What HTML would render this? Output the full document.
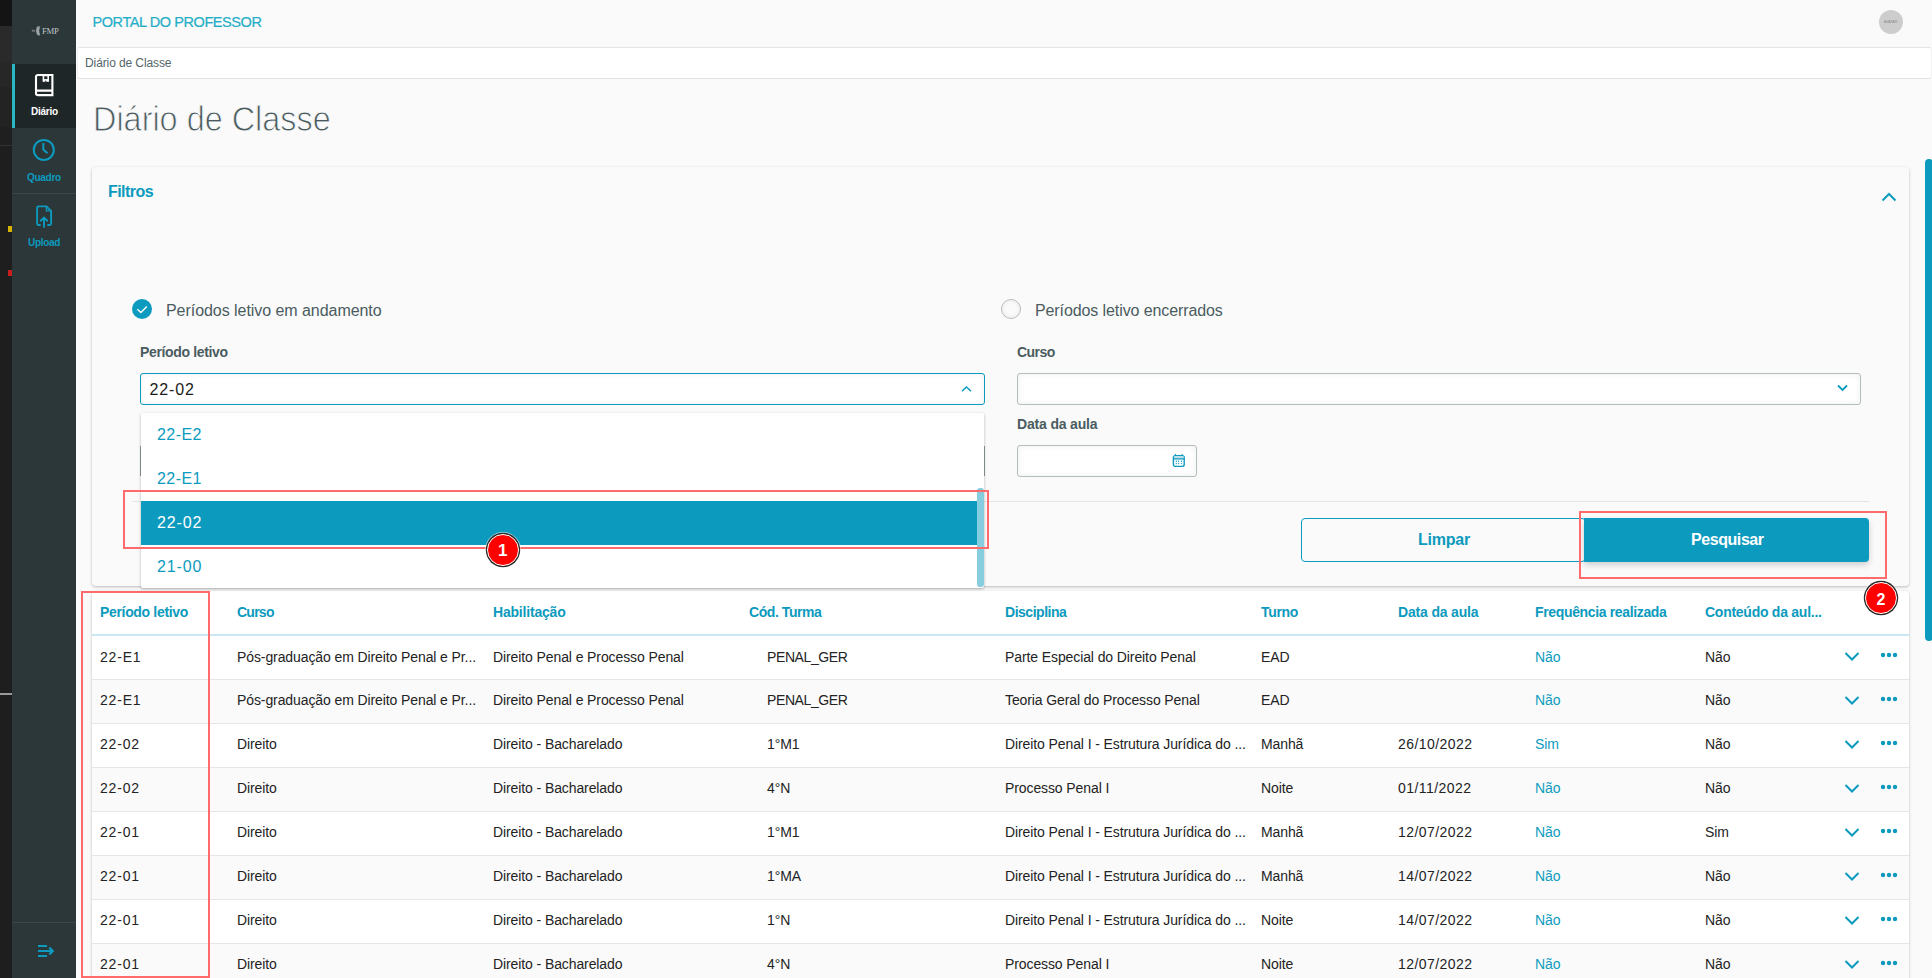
<!DOCTYPE html>
<html><head><meta charset="utf-8">
<style>
*{box-sizing:border-box;margin:0;padding:0}
html,body{width:1932px;height:978px;overflow:hidden;background:#fafafa;font-family:"Liberation Sans",sans-serif;color:#1c1c1c}
.a{position:absolute}
.t{position:absolute;white-space:nowrap;line-height:1}
.teal{color:#0c9abe}
.b{font-weight:700}
/* sidebar */
#strip{left:0;top:0;width:12px;height:978px;background:#1e1e1e}
#side{left:12px;top:0;width:64px;height:978px;background:#2c3739}
/* table */
.row{position:absolute;left:92px;width:1817px;height:44px;border-bottom:1px solid #e6e6e6}
.row.g{background:#fafafa}
.row.w{background:#fff}
.cell{position:absolute;top:13px;font-size:14px;white-space:nowrap;line-height:1;letter-spacing:-0.1px;color:#232323}
.th{position:absolute;top:605px;font-size:14px;font-weight:700;color:#0c9abe;white-space:nowrap;line-height:1;letter-spacing:-0.55px}
.num{letter-spacing:0.8px}
.dt{letter-spacing:0.45px}
</style></head>
<body>
<!-- left window strip -->
<div class="a" id="strip"></div>
<div class="a" style="left:0;top:0;width:12px;height:26px;background:#141414"></div>
<div class="a" style="left:0;top:26px;width:12px;height:36px;background:#2a2a2a"></div>
<div class="a" style="left:0;top:62px;width:12px;height:25px;background:#272727"></div>
<div class="a" style="left:0;top:87px;width:12px;height:40px;background:#232323"></div>
<div class="a" style="left:0;top:127px;width:12px;height:18px;background:#1f1f1f"></div>
<div class="a" style="left:0;top:145px;width:12px;height:1px;background:#333"></div>
<div class="a" style="left:8px;top:226px;width:4px;height:6px;background:#d8b400"></div>
<div class="a" style="left:8px;top:270px;width:4px;height:6px;background:#c81e1e"></div>
<div class="a" style="left:0;top:693px;width:12px;height:2px;background:#9a9a9a"></div>

<!-- sidebar -->
<div class="a" id="side"></div>
<div class="a" style="left:12px;top:64px;width:64px;height:64px;background:#1f2628"></div>
<div class="a" style="left:12px;top:64px;width:3px;height:64px;background:#29b6c6"></div>
<div class="a" style="left:12px;top:193px;width:64px;height:1px;background:#3b4649"></div>
<div class="a" style="left:12px;top:922px;width:64px;height:1px;background:#3b4649"></div>
<!-- logo -->
<div class="t" style="left:41.5px;top:27px;font-family:'Liberation Serif',serif;font-size:8.6px;color:#bfc4c5;letter-spacing:-0.35px;transform:scaleX(1.02);transform-origin:0 0">FMP</div>
<svg class="a" style="left:31px;top:25px" width="11" height="12" viewBox="0 0 11 12"><path d="M6 1.5 Q8.5 1.2 9.5 1.6 Q8 3.5 8.2 5.5 Q8.4 7.8 9.3 10 Q8 11 6.8 10.2 Q5.2 8.8 5 6.5 Q4.8 4 6 1.5Z" fill="#9aa1a3" opacity="0.9"/><path d="M6.8 3 L8 4.5 M6 5.5 L7.5 6.8 M6.3 8 L7.8 9" stroke="#d0d4d5" stroke-width="0.8"/><circle cx="1.8" cy="5.7" r="1.1" fill="#6f7779"/><circle cx="3.4" cy="5.8" r="0.9" fill="#7d8587"/></svg>
<!-- Diario icon -->
<svg class="a" style="left:34px;top:73px" width="21" height="24" viewBox="0 0 21 24"><path d="M2 20.5 V4 Q2 2 4 2 H18.4 V22.1 H4 Q2 22.1 2 20.5 Z M2 17.6 H18.4" stroke="#fff" stroke-width="2.1" fill="none"/><rect x="8.6" y="2" width="6.4" height="6.8" fill="#fff"/><rect x="10.2" y="3.3" width="3.2" height="2.8" fill="#1f2628"/><path d="M11.8 7.2 L10.9 8.8 H12.7 Z" fill="#1f2628"/></svg>
<div class="t b" style="left:31px;top:107px;font-size:10px;color:#fff;letter-spacing:-0.25px">Diário</div>
<!-- Quadro icon -->
<svg class="a" style="left:32px;top:138px" width="24" height="24" viewBox="0 0 24 24"><circle cx="11.8" cy="11.9" r="10" stroke="#0c9abe" stroke-width="2" fill="none"/><path d="M11.3 5 V11.5 L15.5 15.3" stroke="#0c9abe" stroke-width="2" fill="none"/></svg>
<div class="t b" style="left:27px;top:173px;font-size:10px;color:#0c9abe;letter-spacing:-0.29px">Quadro</div>
<!-- Upload icon -->
<svg class="a" style="left:35.5px;top:204.5px" width="17" height="24" viewBox="0 0 18 25"><path d="M5 21 H2.5 Q1.2 21 1.2 19.5 V2.7 Q1.2 1.2 2.7 1.2 H11 L16 6 V19.5 Q16 21 14.5 21 H12" stroke="#0c9abe" stroke-width="2" fill="none"/><path d="M11 1.2 V6 H16" stroke="#0c9abe" stroke-width="1.5" fill="none"/><path d="M8.5 24 V13 M4.5 17 L8.5 13 L12.5 17" stroke="#0c9abe" stroke-width="2" fill="none"/></svg>
<div class="t b" style="left:28px;top:238px;font-size:10px;color:#0c9abe;letter-spacing:-0.3px">Upload</div>
<!-- collapse icon -->
<svg class="a" style="left:37px;top:944px" width="19" height="14" viewBox="0 0 19 14"><path d="M1 2 H10 M1 7 H15 M1 12 H10" stroke="#0c9abe" stroke-width="2"/><path d="M12.3 3.6 L15.8 7 L12.3 10.4" stroke="#0c9abe" stroke-width="2.2" fill="none"/></svg>

<!-- header -->
<div class="t" style="left:92.5px;top:15px;font-size:14.5px;color:#23aec6;letter-spacing:-0.42px;-webkit-text-stroke:0.2px #23aec6">PORTAL DO PROFESSOR</div>
<div class="a" style="left:1879px;top:10px;width:24px;height:24px;border-radius:50%;background:#cdcdcd"></div>
<div class="t" style="left:1884px;top:21px;font-size:3.6px;color:#8a8a8a">AVATAR</div>

<!-- breadcrumb -->
<div class="a" style="left:77px;top:47px;width:1855px;height:32px;background:#fff;border:1px solid #f2f2f2;border-top-color:#e4e4e4;border-bottom-color:#e2e2e2;border-radius:3px"></div>
<div class="t" style="left:85px;top:57px;font-size:12px;color:#55666a;letter-spacing:-0.1px">Diário de Classe</div>

<!-- title -->
<div class="t" style="left:93px;top:100.5px;font-size:35px;color:#4a5c60;transform:scaleX(0.926);transform-origin:0 0;-webkit-text-stroke:0.9px #fafafa;paint-order:normal">Diário de Classe</div>

<!-- filters card -->
<div class="a" style="left:92px;top:167px;width:1817px;height:419px;background:#fafafa;border-radius:4px;box-shadow:0 1px 3px rgba(0,0,0,0.25)"></div>
<div class="t b teal" style="left:108px;top:184px;font-size:16px;letter-spacing:-0.55px">Filtros</div>
<svg class="a" style="left:1881px;top:191px" width="16" height="11" viewBox="0 0 16 11"><path d="M1.5 9.5 L8 3 L14.5 9.5" stroke="#0c9abe" stroke-width="2" fill="none"/></svg>

<!-- radio checked -->
<div class="a" style="left:132px;top:299px;width:20px;height:20px;border-radius:50%;background:#0c9abe"></div>
<svg class="a" style="left:132px;top:299px" width="20" height="20" viewBox="0 0 20 20"><path d="M5.4 10.2 L8.9 13.5 L14.8 7.4" stroke="#fff" stroke-width="1.4" fill="none"/></svg>
<div class="t" style="left:166px;top:303px;font-size:16px;color:#4a5c60;letter-spacing:-0.05px">Períodos letivo em andamento</div>
<!-- radio unchecked -->
<div class="a" style="left:1001px;top:299px;width:20px;height:20px;border-radius:50%;background:#fafafa;border:1.3px solid #b5bcbe;box-shadow:inset 0 0 5px rgba(0,0,0,0.07)"></div>
<div class="t" style="left:1035px;top:303px;font-size:16px;color:#4a5c60;letter-spacing:-0.1px">Períodos letivo encerrados</div>

<!-- labels -->
<div class="t b" style="left:140px;top:345px;font-size:14px;color:#4a5c60;letter-spacing:-0.35px">Período letivo</div>
<div class="t b" style="left:1017px;top:345px;font-size:14px;color:#4a5c60;letter-spacing:-0.55px">Curso</div>
<div class="t b" style="left:1017px;top:417px;font-size:14px;color:#4a5c60;letter-spacing:-0.17px">Data da aula</div>

<!-- periodo input -->
<div class="a" style="left:140px;top:373px;width:845px;height:32px;background:#fff;border:1px solid #0c9abe;border-radius:3px;box-shadow:inset 0 0 6px rgba(0,0,0,0.07)"></div>
<div class="t" style="left:149.5px;top:381.5px;font-size:16px;color:#1c1c1c;letter-spacing:0.9px">22-02</div>
<svg class="a" style="left:960px;top:384px" width="13" height="10" viewBox="0 0 13 10"><path d="M2 7.3 L6.5 3 L11 7.3" stroke="#0c9abe" stroke-width="1.5" fill="none"/></svg>

<!-- curso input -->
<div class="a" style="left:1017px;top:373px;width:844px;height:32px;background:#fff;border:1px solid #b3bcbe;border-radius:3px;box-shadow:inset 0 0 6px rgba(0,0,0,0.07)"></div>
<svg class="a" style="left:1836px;top:383px" width="13" height="10" viewBox="0 0 13 10"><path d="M2 2.5 L6.5 7 L11 2.5" stroke="#0c9abe" stroke-width="1.8" fill="none"/></svg>

<!-- data input -->
<div class="a" style="left:1017px;top:445px;width:180px;height:32px;background:#fff;border:1px solid #b3bcbe;border-radius:3px;box-shadow:inset 0 0 6px rgba(0,0,0,0.07)"></div>
<svg class="a" style="left:1172px;top:453px" width="14" height="15" viewBox="0 0 14 15"><rect x="1.4" y="2.6" width="10.8" height="10.8" rx="1.8" stroke="#0c9abe" stroke-width="1.4" fill="none"/><rect x="2" y="3.2" width="9.6" height="2" fill="#bfe0ea"/><path d="M1.4 5.9 H12.2" stroke="#0c9abe" stroke-width="1.3"/><path d="M3.4 1 V3 M10.2 1 V3" stroke="#0c9abe" stroke-width="1.1"/><circle cx="4.3" cy="8.3" r="0.7" fill="#0c9abe"/><circle cx="6.6" cy="8.3" r="0.7" fill="#0c9abe"/><circle cx="9.5" cy="8.3" r="0.7" fill="#0c9abe"/><circle cx="4.3" cy="10.6" r="0.7" fill="#0c9abe"/><circle cx="6.6" cy="10.6" r="0.7" fill="#0c9abe"/><circle cx="9.5" cy="10.6" r="0.7" fill="#0c9abe"/></svg>

<!-- divider -->
<div class="a" style="left:132px;top:501px;width:1737px;height:1px;background:#e4e4e4"></div>
<div class="a" style="left:140px;top:446px;width:1px;height:30px;background:#8f999b"></div>
<div class="a" style="left:984px;top:446px;width:1px;height:30px;background:#8f999b"></div>

<!-- buttons -->
<div class="a" style="left:1301px;top:518px;width:285px;height:44px;border:1px solid #0c9abe;border-radius:4px;background:#fafafa"></div>
<div class="t b teal" style="left:1418px;top:532px;font-size:16px;letter-spacing:-0.22px">Limpar</div>
<div class="a" style="left:1584px;top:518px;width:285px;height:44px;border-radius:0 4px 4px 0;background:#0c9abe;box-shadow:0 3px 6px rgba(0,0,0,0.18)"></div>
<div class="t b" style="left:1691px;top:532px;font-size:16px;color:#fff;letter-spacing:-0.43px">Pesquisar</div>

<!-- table card -->
<div class="a" style="left:92px;top:591px;width:1817px;height:400px;background:#fff;border-radius:4px;box-shadow:0 1px 3px rgba(0,0,0,0.25)"></div>
<div class="th" style="left:100px;letter-spacing:-0.33px">Período letivo</div>
<div class="th" style="left:237px;letter-spacing:-0.75px">Curso</div>
<div class="th" style="left:493px;letter-spacing:-0.2px">Habilitação</div>
<div class="th" style="left:749px;letter-spacing:-0.43px">Cód. Turma</div>
<div class="th" style="left:1005px;letter-spacing:-0.48px">Disciplina</div>
<div class="th" style="left:1261px;letter-spacing:-0.32px">Turno</div>
<div class="th" style="left:1398px;letter-spacing:-0.17px">Data da aula</div>
<div class="th" style="left:1535px;letter-spacing:-0.35px">Frequência realizada</div>
<div class="th" style="left:1705px;letter-spacing:-0.26px">Conteúdo da aul...</div>
<div class="a" style="left:92px;top:634px;width:1817px;height:2px;background:#c9e8f1"></div>

<div id="rows">
<div class="row w" style="top:636px">
<div class="cell num" style="left:8px;top:14px">22-E1</div>
<div class="cell" style="left:145px;top:14px">Pós-graduação em Direito Penal e Pr...</div>
<div class="cell" style="left:401px;top:14px">Direito Penal e Processo Penal</div>
<div class="cell" style="left:675px;top:14px;letter-spacing:-0.4px">PENAL_GER</div>
<div class="cell" style="left:913px;top:14px">Parte Especial do Direito Penal</div>
<div class="cell" style="left:1169px;top:14px">EAD</div>
<div class="cell" style="left:1443px;color:#0c9abe;top:14px">Não</div>
<div class="cell" style="left:1613px;top:14px">Não</div>
<svg class="a" style="left:1752px;top:13.5px" width="16" height="12" viewBox="0 0 16 12"><path d="M1.5 3 L8 9.5 L14.5 3" stroke="#0c9abe" stroke-width="2" fill="none"/></svg>
<svg class="a" style="left:1788px;top:16px" width="18" height="6" viewBox="0 0 18 6"><circle cx="3" cy="3" r="2.2" fill="#0c9abe"/><circle cx="9" cy="3" r="2.2" fill="#0c9abe"/><circle cx="15" cy="3" r="2.2" fill="#0c9abe"/></svg>
</div>
<div class="row g" style="top:680px">
<div class="cell num" style="left:8px">22-E1</div>
<div class="cell" style="left:145px">Pós-graduação em Direito Penal e Pr...</div>
<div class="cell" style="left:401px">Direito Penal e Processo Penal</div>
<div class="cell" style="left:675px;letter-spacing:-0.4px">PENAL_GER</div>
<div class="cell" style="left:913px">Teoria Geral do Processo Penal</div>
<div class="cell" style="left:1169px">EAD</div>
<div class="cell" style="left:1443px;color:#0c9abe">Não</div>
<div class="cell" style="left:1613px">Não</div>
<svg class="a" style="left:1752px;top:13.5px" width="16" height="12" viewBox="0 0 16 12"><path d="M1.5 3 L8 9.5 L14.5 3" stroke="#0c9abe" stroke-width="2" fill="none"/></svg>
<svg class="a" style="left:1788px;top:16px" width="18" height="6" viewBox="0 0 18 6"><circle cx="3" cy="3" r="2.2" fill="#0c9abe"/><circle cx="9" cy="3" r="2.2" fill="#0c9abe"/><circle cx="15" cy="3" r="2.2" fill="#0c9abe"/></svg>
</div>
<div class="row w" style="top:724px">
<div class="cell num" style="left:8px">22-02</div>
<div class="cell" style="left:145px">Direito</div>
<div class="cell" style="left:401px">Direito - Bacharelado</div>
<div class="cell" style="left:675px">1°M1</div>
<div class="cell" style="left:913px">Direito Penal I - Estrutura Jurídica do ...</div>
<div class="cell" style="left:1169px">Manhã</div>
<div class="cell dt" style="left:1306px">26/10/2022</div>
<div class="cell" style="left:1443px;color:#0c9abe">Sim</div>
<div class="cell" style="left:1613px">Não</div>
<svg class="a" style="left:1752px;top:13.5px" width="16" height="12" viewBox="0 0 16 12"><path d="M1.5 3 L8 9.5 L14.5 3" stroke="#0c9abe" stroke-width="2" fill="none"/></svg>
<svg class="a" style="left:1788px;top:16px" width="18" height="6" viewBox="0 0 18 6"><circle cx="3" cy="3" r="2.2" fill="#0c9abe"/><circle cx="9" cy="3" r="2.2" fill="#0c9abe"/><circle cx="15" cy="3" r="2.2" fill="#0c9abe"/></svg>
</div>
<div class="row g" style="top:768px">
<div class="cell num" style="left:8px">22-02</div>
<div class="cell" style="left:145px">Direito</div>
<div class="cell" style="left:401px">Direito - Bacharelado</div>
<div class="cell" style="left:675px">4°N</div>
<div class="cell" style="left:913px">Processo Penal I</div>
<div class="cell" style="left:1169px">Noite</div>
<div class="cell dt" style="left:1306px">01/11/2022</div>
<div class="cell" style="left:1443px;color:#0c9abe">Não</div>
<div class="cell" style="left:1613px">Não</div>
<svg class="a" style="left:1752px;top:13.5px" width="16" height="12" viewBox="0 0 16 12"><path d="M1.5 3 L8 9.5 L14.5 3" stroke="#0c9abe" stroke-width="2" fill="none"/></svg>
<svg class="a" style="left:1788px;top:16px" width="18" height="6" viewBox="0 0 18 6"><circle cx="3" cy="3" r="2.2" fill="#0c9abe"/><circle cx="9" cy="3" r="2.2" fill="#0c9abe"/><circle cx="15" cy="3" r="2.2" fill="#0c9abe"/></svg>
</div>
<div class="row w" style="top:812px">
<div class="cell num" style="left:8px">22-01</div>
<div class="cell" style="left:145px">Direito</div>
<div class="cell" style="left:401px">Direito - Bacharelado</div>
<div class="cell" style="left:675px">1°M1</div>
<div class="cell" style="left:913px">Direito Penal I - Estrutura Jurídica do ...</div>
<div class="cell" style="left:1169px">Manhã</div>
<div class="cell dt" style="left:1306px">12/07/2022</div>
<div class="cell" style="left:1443px;color:#0c9abe">Não</div>
<div class="cell" style="left:1613px">Sim</div>
<svg class="a" style="left:1752px;top:13.5px" width="16" height="12" viewBox="0 0 16 12"><path d="M1.5 3 L8 9.5 L14.5 3" stroke="#0c9abe" stroke-width="2" fill="none"/></svg>
<svg class="a" style="left:1788px;top:16px" width="18" height="6" viewBox="0 0 18 6"><circle cx="3" cy="3" r="2.2" fill="#0c9abe"/><circle cx="9" cy="3" r="2.2" fill="#0c9abe"/><circle cx="15" cy="3" r="2.2" fill="#0c9abe"/></svg>
</div>
<div class="row g" style="top:856px">
<div class="cell num" style="left:8px">22-01</div>
<div class="cell" style="left:145px">Direito</div>
<div class="cell" style="left:401px">Direito - Bacharelado</div>
<div class="cell" style="left:675px">1°MA</div>
<div class="cell" style="left:913px">Direito Penal I - Estrutura Jurídica do ...</div>
<div class="cell" style="left:1169px">Manhã</div>
<div class="cell dt" style="left:1306px">14/07/2022</div>
<div class="cell" style="left:1443px;color:#0c9abe">Não</div>
<div class="cell" style="left:1613px">Não</div>
<svg class="a" style="left:1752px;top:13.5px" width="16" height="12" viewBox="0 0 16 12"><path d="M1.5 3 L8 9.5 L14.5 3" stroke="#0c9abe" stroke-width="2" fill="none"/></svg>
<svg class="a" style="left:1788px;top:16px" width="18" height="6" viewBox="0 0 18 6"><circle cx="3" cy="3" r="2.2" fill="#0c9abe"/><circle cx="9" cy="3" r="2.2" fill="#0c9abe"/><circle cx="15" cy="3" r="2.2" fill="#0c9abe"/></svg>
</div>
<div class="row w" style="top:900px">
<div class="cell num" style="left:8px">22-01</div>
<div class="cell" style="left:145px">Direito</div>
<div class="cell" style="left:401px">Direito - Bacharelado</div>
<div class="cell" style="left:675px">1°N</div>
<div class="cell" style="left:913px">Direito Penal I - Estrutura Jurídica do ...</div>
<div class="cell" style="left:1169px">Noite</div>
<div class="cell dt" style="left:1306px">14/07/2022</div>
<div class="cell" style="left:1443px;color:#0c9abe">Não</div>
<div class="cell" style="left:1613px">Não</div>
<svg class="a" style="left:1752px;top:13.5px" width="16" height="12" viewBox="0 0 16 12"><path d="M1.5 3 L8 9.5 L14.5 3" stroke="#0c9abe" stroke-width="2" fill="none"/></svg>
<svg class="a" style="left:1788px;top:16px" width="18" height="6" viewBox="0 0 18 6"><circle cx="3" cy="3" r="2.2" fill="#0c9abe"/><circle cx="9" cy="3" r="2.2" fill="#0c9abe"/><circle cx="15" cy="3" r="2.2" fill="#0c9abe"/></svg>
</div>
<div class="row g" style="top:944px">
<div class="cell num" style="left:8px">22-01</div>
<div class="cell" style="left:145px">Direito</div>
<div class="cell" style="left:401px">Direito - Bacharelado</div>
<div class="cell" style="left:675px">4°N</div>
<div class="cell" style="left:913px">Processo Penal I</div>
<div class="cell" style="left:1169px">Noite</div>
<div class="cell dt" style="left:1306px">12/07/2022</div>
<div class="cell" style="left:1443px;color:#0c9abe">Não</div>
<div class="cell" style="left:1613px">Não</div>
<svg class="a" style="left:1752px;top:13.5px" width="16" height="12" viewBox="0 0 16 12"><path d="M1.5 3 L8 9.5 L14.5 3" stroke="#0c9abe" stroke-width="2" fill="none"/></svg>
<svg class="a" style="left:1788px;top:16px" width="18" height="6" viewBox="0 0 18 6"><circle cx="3" cy="3" r="2.2" fill="#0c9abe"/><circle cx="9" cy="3" r="2.2" fill="#0c9abe"/><circle cx="15" cy="3" r="2.2" fill="#0c9abe"/></svg>
</div>
</div><!--/rows-->

<!-- dropdown list -->
<div class="a" style="left:141px;top:413px;width:843px;height:175px;background:#fff;box-shadow:0 1px 3px rgba(0,0,0,0.3);border-radius:2px"></div>
<div class="a" style="left:141px;top:501px;width:836px;height:44px;background:#0c9abe"></div>
<div class="t teal" style="left:157px;top:427px;font-size:16px;letter-spacing:0.45px">22-E2</div>
<div class="t teal" style="left:157px;top:471px;font-size:16px;letter-spacing:0.45px">22-E1</div>
<div class="t" style="left:157px;top:515px;font-size:16px;color:#fff;letter-spacing:0.9px">22-02</div>
<div class="t teal" style="left:157px;top:559px;font-size:16px;letter-spacing:0.9px">21-00</div>
<div class="a" style="left:977px;top:488px;width:7px;height:99px;background:#86cde0;border-radius:3px"></div>

<!-- annotations -->
<div class="a" style="left:123px;top:490px;width:866px;height:59px;border:2px solid #ff6a6a"></div>
<div class="a" style="left:1579px;top:511px;width:308px;height:68px;border:2px solid #ff6a6a"></div>
<div class="a" style="left:81px;top:591px;width:129px;height:387px;border:2px solid #ff6a6a"></div>
<div class="a" style="left:487px;top:533.5px;width:32px;height:32px;border-radius:50%;background:#f00;border:1px solid #fff;box-shadow:0 0 0 1.2px #2a2a2a,0 0 0 2px rgba(255,255,255,0.6)"></div>
<div class="t b" style="left:498px;top:542px;font-size:17px;color:#fff">1</div>
<div class="a" style="left:1865px;top:582px;width:32px;height:32px;border-radius:50%;background:#f00;border:1px solid #fff;box-shadow:0 0 0 1.2px #2a2a2a,0 0 0 2px rgba(255,255,255,0.6)"></div>
<div class="t b" style="left:1876.5px;top:591.5px;font-size:16px;color:#fff">2</div>

<!-- page scrollbar -->
<div class="a" style="left:1925px;top:159px;width:8px;height:482px;background:#0c9abe;border-radius:4px"></div>
</body></html>
